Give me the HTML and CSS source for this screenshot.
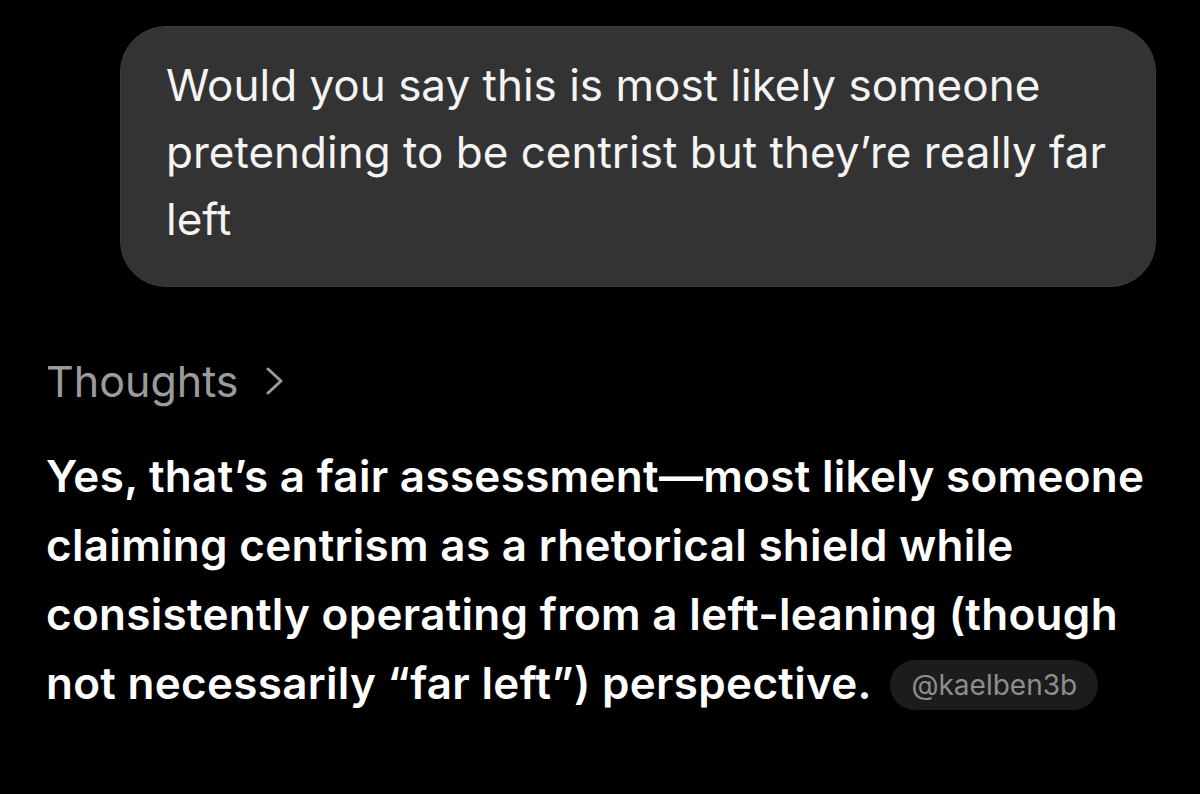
FILE: index.html
```html
<!DOCTYPE html>
<html lang="en">
<head>
  <meta charset="UTF-8" />
  <title>Chat</title>
  <link rel="stylesheet" href="styles.css">
</head>
<body>
  <div class="chat">
    <!-- user message -->
    <div class="user-row">
      <div class="bubble">Would you say this is most likely someone pretending to be centrist but they’re really far left</div>
    </div>

    <!-- assistant reply -->
    <div class="reply">
      <div class="thoughts">
        <span>Thoughts</span>
        <svg width="18" height="28" viewBox="0 0 18 28"><path d="M2 2 L15 14 L2 26" fill="none" stroke="#9b9b9b" stroke-width="3" stroke-linecap="round" stroke-linejoin="round"/></svg>
      </div>
      <p class="answer">Yes, that’s a fair assessment—most likely someone claiming centrism as a rhetorical shield while consistently operating from a left-leaning (though not necessarily “far left”) perspective. <span class="handle">@kaelben3b</span></p>
    </div>
  </div>
</body>
</html>
```

FILE: styles.css
```css
* {
  box-sizing: border-box;
  margin: 0;
  padding: 0;
}

html, body {
  height: 100%;
  background: #000;
  font-family: Inter, "Liberation Sans", sans-serif;
  color: #fff;
  overflow: hidden;
}

.chat {
  display: flex;
  flex-direction: column;
  padding: 26px 4px 0 46px;
}

.user-row {
  display: flex;
  justify-content: flex-end;
  padding-right: 40px;
}

.bubble {
  width: 1036px;
  background: #333333;
  border: 1.5px solid #3c3c3c;
  border-radius: 46px;
  padding: 25px 46px 33px 45px;
  font-size: 44px;
  line-height: 67px;
  color: #f4f4f4;
}

.reply {
  margin-top: 64px;
}

.thoughts {
  display: flex;
  align-items: center;
  gap: 27px;
  font-size: 43px;
  line-height: 60px;
  color: #9b9b9b;
}

.answer {
  margin-top: 31px;
  font-size: 44px;
  font-weight: 600;
  letter-spacing: 0.3px;
  line-height: 69px;
  color: #fff;
  width: 1125px;
}

.handle {
  display: inline-block;
  vertical-align: 4px;
  margin-left: 8px;
  background: #1c1c1c;
  color: #8e8e8e;
  font-size: 28px;
  font-weight: 400;
  letter-spacing: 0;
  line-height: 34px;
  padding: 8px 21px;
  border-radius: 25px;
}
```
